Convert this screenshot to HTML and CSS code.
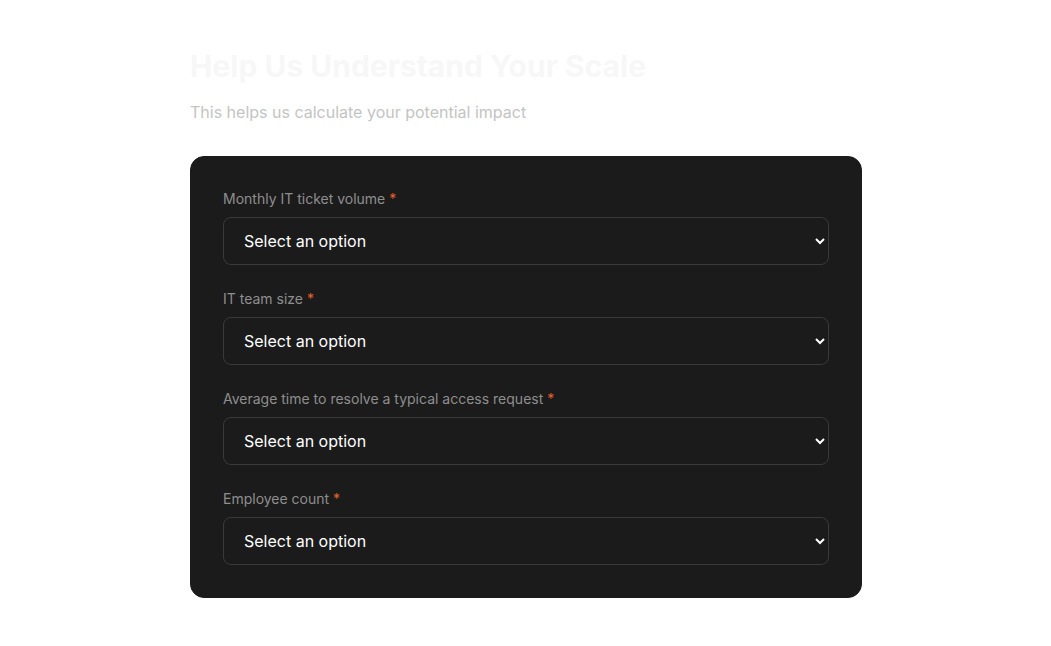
FILE: index.html
```html
<!DOCTYPE html>
<html lang="en">
<head>
<meta charset="utf-8">
<title>Help Us Understand Your Scale</title>
<link rel="stylesheet" href="styles.css">
</head>
<body>
<main class="page">
  <h1 class="title">Help Us Understand Your Scale</h1>
  <p class="subtitle">This helps us calculate your potential impact</p>
  <form class="card">
    <div class="field">
      <label class="label" for="tickets">Monthly IT ticket volume <span class="req">*</span></label>
      <select id="tickets" class="select">
        <option>Select an option</option>
      </select>
    </div>
    <div class="field">
      <label class="label" for="team">IT team size <span class="req">*</span></label>
      <select id="team" class="select">
        <option>Select an option</option>
      </select>
    </div>
    <div class="field">
      <label class="label" for="time">Average time to resolve a typical access request <span class="req">*</span></label>
      <select id="time" class="select">
        <option>Select an option</option>
      </select>
    </div>
    <div class="field">
      <label class="label" for="employees">Employee count <span class="req">*</span></label>
      <select id="employees" class="select">
        <option>Select an option</option>
      </select>
    </div>
  </form>
</main>
</body>
</html>
```
FILE: styles.css
```css
* { box-sizing: border-box; }
html, body { margin: 0; padding: 0; background: #fff; }
body { font-family: Inter, "Noto Sans", sans-serif; }
.page {
  width: 672px;
  margin: 0 auto 0 190px;
  padding-top: 48px;
}
.title {
  margin: 0 0 16px;
  font-size: 30px;
  line-height: 36px;
  font-weight: 700;
  color: #f7f7f7;
}
.subtitle {
  margin: 0 0 32px;
  font-size: 16px;
  line-height: 24px;
  color: #c4c4c4;
}
.card {
  background: #1b1b1b;
  border: 1px solid #1b1b1b;
  border-radius: 14px;
  padding: 32px;
  display: flex;
  flex-direction: column;
  gap: 24px;
}
.field {
  display: flex;
  flex-direction: column;
  gap: 8px;
}
.label {
  font-size: 14px;
  line-height: 20px;
  color: #8e8e8e;
}
.req { color: #e8622c; }
.select {
  height: 48px;
  width: 100%;
  font-family: Inter, "Noto Sans", sans-serif;
  font-size: 16px;
  color: #fff;
  background-color: #1b1b1b;
  border: 1px solid #3a3a3a;
  border-radius: 8px;
  padding: 0 16px 0 16px;
  color-scheme: dark;
}
```
